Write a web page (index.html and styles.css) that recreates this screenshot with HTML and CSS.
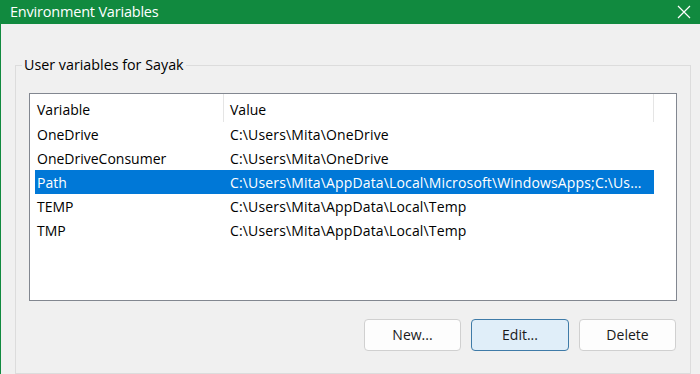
FILE: index.html
```html
<!DOCTYPE html>
<html>
<head>
<meta charset="utf-8">
<link rel="stylesheet" href="styles.css">
</head>
<body>
<div class="window">
  <div class="titlebar">
    <span class="title">Environment Variables</span>
    <svg class="close" width="14" height="14" viewBox="0 0 14 14"><path d="M1 1 L13 13 M13 1 L1 13" stroke="#ffffff" stroke-width="1.2" fill="none"/></svg>
  </div>
  <div class="content">
    <fieldset class="group">
      <legend class="legend">User variables for Sayak</legend>
      <div class="list">
        <div class="header">
          <div class="hcol c1">Variable</div>
          <div class="hcol c2">Value</div>
          <div class="hcol c3"></div>
        </div>
        <div class="rows">
          <div class="row"><span class="c1">OneDrive</span><span class="c2">C:\Users\Mita\OneDrive</span></div>
          <div class="row"><span class="c1">OneDriveConsumer</span><span class="c2">C:\Users\Mita\OneDrive</span></div>
          <div class="row selected"><span class="c1">Path</span><span class="c2">C:\Users\Mita\AppData\Local\Microsoft\WindowsApps;C:\Us...</span></div>
          <div class="row"><span class="c1">TEMP</span><span class="c2">C:\Users\Mita\AppData\Local\Temp</span></div>
          <div class="row"><span class="c1">TMP</span><span class="c2">C:\Users\Mita\AppData\Local\Temp</span></div>
        </div>
      </div>
      <div class="buttons">
        <button class="btn">New...</button>
        <button class="btn default">Edit...</button>
        <button class="btn">Delete</button>
      </div>
    </fieldset>
  </div>
</div>
</body>
</html>
```

FILE: styles.css
```css
* { box-sizing: border-box; }
html, body { margin: 0; padding: 0; }
body {
  width: 700px;
  height: 374px;
  overflow: hidden;
  background: #f0f0f0;
  font-family: "Open Sans", "Noto Sans", sans-serif;
  color: #000;
}
.window {
  width: 700px;
  height: 374px;
  border-left: 1px solid #118a3f;
  display: flex;
  flex-direction: column;
  background: #f0f0f0;
}
.titlebar {
  height: 30px;
  background: #118a3f;
  margin-left: -1px;
  display: flex;
  align-items: center;
  justify-content: space-between;
  padding: 0 10px 2px 10px;
  color: #fff;
}
.title {
  font-size: 14.5px;
  letter-spacing: -0.2px;
}
.close {
  margin-right: -1px;
  margin-top: 1px;
}
.content {
  flex: 1;
  padding: 32px 9px 0 14px;
}
.group {
  margin: 0;
  border: 1px solid #dcdcdc;
  padding: 0 13px 0 13px;
  height: 318px;
  min-width: 0;
}
.legend {
  font-size: 14.3px;
  padding: 0 2px;
  margin-left: -7px;
  line-height: 18px;
}
.list {
  margin-top: 19px;
  height: 208px;
  border: 1px solid #828790;
  background: #fff;
  font-size: 14px;
}
.header {
  height: 28px;
  display: flex;
}
.hcol {
  display: flex;
  align-items: center;
  border-right: 1px solid #e5e5e5;
  padding-top: 2px;
}
.header .c1 { width: 194px; padding-left: 7px; }
.header .c2 { width: 430px; padding-left: 6px; }
.header .c3 { border-right: none; flex: 1; }
.rows {
  padding-left: 5px;
  padding-right: 22px;
}
.row {
  height: 24px;
  display: flex;
  align-items: center;
  white-space: nowrap;
}
.row .c1 { width: 195px; padding-left: 2px; }
.row .c2 { padding-left: 0px; letter-spacing: 0.15px; }
.row.selected {
  background: #0078d7;
  color: #fff;
}
.buttons {
  margin-top: 18px;
  display: flex;
  justify-content: flex-end;
  gap: 10px;
  padding-right: 1px;
}
.btn {
  width: 97px;
  height: 32px;
  font-family: "Open Sans", "Noto Sans", sans-serif;
  font-size: 14px;
  color: #1a1a1a;
  background: #fdfdfd;
  border: 1px solid #d0d0d0;
  border-radius: 4px;
  padding: 0 0 2px 0;
}
.btn.default {
  background: #e0eef9;
  border-color: #3f7ba8;
  width: 98px;
}
```
